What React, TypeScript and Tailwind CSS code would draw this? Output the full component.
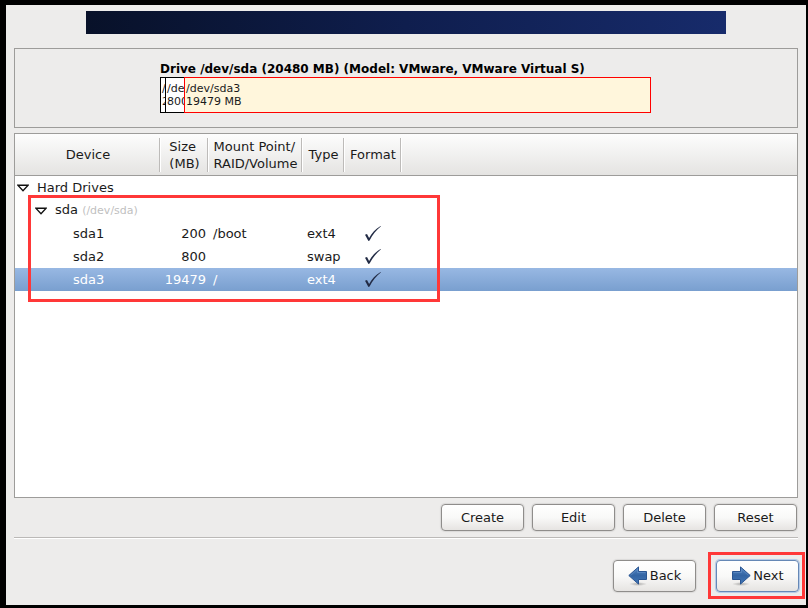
import type { ReactNode } from "react";

type Partition = {
  name: string;
  size: number;
  mount: string;
  type: string;
  format: boolean;
  selected?: boolean;
};

const partitions: Partition[] = [
  { name: "sda1", size: 200, mount: "/boot", type: "ext4", format: true },
  { name: "sda2", size: 800, mount: "", type: "swap", format: true },
  { name: "sda3", size: 19479, mount: "/", type: "ext4", format: true, selected: true },
];

function Expander({ label }: { label: string }) {
  return (
    <button type="button" aria-label={label} aria-expanded="true" className="flex h-4 w-4 shrink-0 items-center justify-center">
      <svg width="12" height="8" viewBox="0 0 12 8" aria-hidden="true">
        <path d="M.8 1.200h10.400L6 6.700Z" fill="#fff" stroke="#111" strokeWidth="1.4" />
      </svg>
    </button>
  );
}

function CheckMark() {
  return (
    <svg width="18" height="17" viewBox="0 0 18 17" role="img" aria-label="Yes" className="mx-auto block">
      <path d="M1 9.800 3 9 5.100 13C7.800 8 11.400 4 16.600 1L17 1.300C12.400 5 8.600 9.600 5.600 15.600L4.400 16Z" fill="#222b45" />
    </svg>
  );
}

function Arrow({ direction }: { direction: "left" | "right" }) {
  return (
    <svg width="20" height="20" viewBox="0 0 20 20" aria-hidden="true" className="shrink-0">
      <defs>
        <linearGradient id={`arrow-${direction}`} x1="0" y1="0" x2="0" y2="1">
          <stop offset="0" stopColor="#5587c2" />
          <stop offset="0.5" stopColor="#3465a4" />
          <stop offset="1" stopColor="#4277b6" />
        </linearGradient>
        <radialGradient id={`shade-${direction}`}>
          <stop offset="0" stopColor="#000" stopOpacity="0.28" />
          <stop offset="1" stopColor="#000" stopOpacity="0" />
        </radialGradient>
      </defs>
      <ellipse cx="10" cy="18" rx="9" ry="2" fill={`url(#shade-${direction})`} />
      <g transform={direction === "right" ? "matrix(-1 0 0 1 20 0)" : undefined}>
        <path d="M.8 9.500 10.500.9v4.600h8v8h-8v4.600Z" fill={`url(#arrow-${direction})`} stroke="#2a5592" />
        <path d="M2.500 9.500 9.500 3.200v3.300h8" fill="none" stroke="#6f9bd0" strokeWidth="0.5" />
      </g>
    </svg>
  );
}

function PushButton({ children, tall, focused }: { children: ReactNode; tall?: boolean; focused?: boolean }) {
  return (
    <button
      type="button"
      className={`flex w-[83px] items-center justify-center gap-0.5 rounded-[4px] border bg-linear-to-b from-white via-[#f9f9f8] to-[#e6e4e2] shadow-[0_0_1px_1px_rgba(0,0,0,0.08)] ${
        tall ? "h-8" : "h-[27px]"
      } ${focused ? "border-[#6688b6] ring-1 ring-[#b5cbe8]" : "border-[#8f8d8b]"}`}
    >
      {children}
    </button>
  );
}

function HeaderCell({ children, width }: { children: ReactNode; width: string }) {
  return (
    <th scope="col" className={`h-[42px] p-0 pb-px font-normal ${width}`}>
      <div className="flex h-[34px] items-center justify-center border-r border-[#bdbbb9] pl-0.5 text-left leading-[17px] whitespace-nowrap shadow-[1px_0_0_#fff]">
        {children}
      </div>
    </th>
  );
}

function DriveSegment({ device, size, className }: { device: string; size: string; className: string }) {
  return (
    <div className={`flex h-9 flex-col justify-center overflow-hidden border pl-px text-[11px] leading-[13px] whitespace-nowrap ${className}`}>
      <span>{device}</span>
      <span>{size}</span>
    </div>
  );
}

export default function App() {
  return (
    <div className="flex min-h-screen flex-col bg-black pt-[5px] pr-0.5 pb-[3px] pl-1.5 font-['DejaVu_Sans',sans-serif] text-[13px] leading-4 text-[#1a1a1a]">
      <main className="flex flex-1 flex-col bg-[#edeceb] px-2 pt-1.5">
        <div className="mx-[72px] h-[23px] bg-linear-to-r from-[#081129] via-[#0f1e4e] via-50% to-[#172b6b]" />

        <section aria-label="Drive layout" className="mt-3.5 flex h-20 justify-center border border-[#9d9c9a] pt-3">
          <div className="w-[492px] pr-px">
            <h1 className="text-[12px] leading-4 font-bold whitespace-nowrap text-black">
              Drive /dev/sda (20480 MB) (Model: VMware, VMware Virtual S)
            </h1>
            <div className="flex">
              <DriveSegment device="/dev/sda1" size="200 MB" className="w-1.5 border-black bg-white" />
              <DriveSegment device="/dev/sda2" size="800 MB" className="-ml-px w-5 border-black bg-white" />
              <DriveSegment device="/dev/sda3" size="19479 MB" className="-ml-px flex-1 border-[#ff0000] bg-[#fff6dc]" />
            </div>
          </div>
        </section>

        <section aria-label="Devices" className="relative mt-[5px] flex-1 border border-[#9d9c9a] bg-white">
          <table className="w-full table-fixed border-separate border-spacing-0">
            <thead className="bg-linear-to-b from-[#fdfdfd] to-[#e4e3e1] shadow-[inset_0_-1px_0_#9d9c9a]">
              <tr>
                <HeaderCell width="w-[145px]">Device</HeaderCell>
                <HeaderCell width="w-12">
                  <span>Size<br />(MB)</span>
                </HeaderCell>
                <HeaderCell width="w-[94px]">
                  <span>Mount Point/<br />RAID/Volume</span>
                </HeaderCell>
                <HeaderCell width="w-[42px]">Type</HeaderCell>
                <HeaderCell width="w-[57px]">Format</HeaderCell>
                <td />
              </tr>
            </thead>
            <tbody>
              <tr className="h-[23px]">
                <td colSpan={6} className="p-0">
                  <div className="flex items-center gap-1.5">
                    <Expander label="Hard Drives" />
                    <span>Hard Drives</span>
                  </div>
                </td>
              </tr>
              <tr className="h-[23px]">
                <td colSpan={6} className="p-0 pl-[18px]">
                  <div className="flex items-center gap-1.5">
                    <Expander label="sda" />
                    <span>
                      sda <small className="text-[11px] text-[#bfbfbf]">(/dev/sda)</small>
                    </span>
                  </div>
                </td>
              </tr>
              {partitions.map((p) => (
                <tr
                  key={p.name}
                  aria-selected={p.selected}
                  className={`h-[23px] ${p.selected ? "bg-linear-to-b from-[#98b8e3] to-[#799fcf] text-white" : ""}`}
                >
                  <td className="p-0 pl-[58px]">{p.name}</td>
                  <td className="p-0 pr-0.5 text-right">{p.size}</td>
                  <td className="p-0 pl-[5px]">{p.mount}</td>
                  <td className="p-0 pl-[5px]">{p.type}</td>
                  <td className="p-0">{p.format && <CheckMark />}</td>
                  <td />
                </tr>
              ))}
            </tbody>
          </table>
          <div className="pointer-events-none absolute top-[61px] left-[13px] h-[107px] w-[412px] border-3 border-[#ff3838]" />
        </section>

        <div className="mt-1.5 flex justify-end gap-2 pr-px">
          <PushButton>Create</PushButton>
          <PushButton>Edit</PushButton>
          <PushButton>Delete</PushButton>
          <PushButton>Reset</PushButton>
        </div>

        <hr className="mt-1.5 h-0.5 border-t border-b border-t-[#bbb9b7] border-b-white" />

        <nav aria-label="Steps" className="-mr-px mt-[21px] mb-[13px] flex justify-end gap-5">
          <PushButton tall>
            <Arrow direction="left" />
            Back
          </PushButton>
          <div className="relative">
            <PushButton tall focused>
              <Arrow direction="right" />
              Next
            </PushButton>
            <div className="pointer-events-none absolute -top-2 -right-1.5 -bottom-[7px] -left-2 border-3 border-[#ff3838]" />
          </div>
        </nav>
      </main>
    </div>
  );
}
